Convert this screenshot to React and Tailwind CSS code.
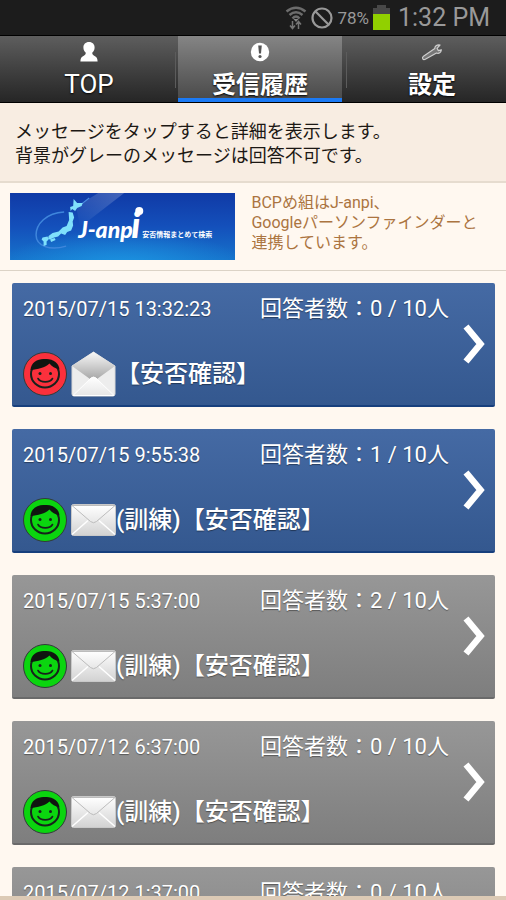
import React from "react";

const messages = [
  { date: "2015/07/15 13:32:23", count: 0, title: "【安否確認】", drill: false, safe: false, closed: false },
  { date: "2015/07/15 9:55:38", count: 1, title: "【安否確認】", drill: true, safe: true, closed: false },
  { date: "2015/07/15 5:37:00", count: 2, title: "【安否確認】", drill: true, safe: true, closed: true },
  { date: "2015/07/12 6:37:00", count: 0, title: "【安否確認】", drill: true, safe: true, closed: true },
  { date: "2015/07/12 1:37:00", count: 0, title: "【安否確認】", drill: true, safe: true, closed: true },
];

function StatusBar() {
  return (
    <div className="flex h-9 shrink-0 items-center justify-end border-b border-black bg-[#1c1c1c] pr-4 text-[#999999]">
      <svg width="22" height="26" viewBox="0 0 22 26" className="mr-1" aria-hidden="true">
        <g fill="none" stroke="#6c6c6c" strokeWidth="2.500">
          <path d="M1.500 6.500Q11 -1 20.500 6.500" />
          <path d="M4.500 10Q11 4.500 17.500 10" />
          <path d="M7.500 13.500Q11 9.500 14.500 13.500" />
        </g>
        <path d="M8.500 14h5l-2.500 3z" fill="#858585" />
        <path d="M7.500 16v7M5 20.500l2.500 3 2.500-3M13.500 24v-7M11 19.500l2.500-3 2.500 3" fill="none" stroke="#757575" strokeWidth="1.500" />
      </svg>
      <svg width="22" height="22" viewBox="0 0 22 22" className="mr-1" aria-hidden="true">
        <g fill="none" stroke="#999999" strokeWidth="2.200">
          <circle cx="11" cy="11" r="9.500" />
          <path d="M4.300 4.300l13.400 13.400" />
        </g>
      </svg>
      <span className="mr-1 text-[17px] leading-5">78%</span>
      <svg width="17" height="25" viewBox="0 0 17 25" className="mr-2" aria-hidden="true">
        <path d="M4 0h9v3h4v22H0V3h4z" fill="#484848" />
        <path d="M0 9h17v16H0z" fill="#91d000" />
      </svg>
      <span className="text-[25px] leading-8">1:32 PM</span>
    </div>
  );
}

function PersonIcon() {
  return (
    <svg width="20" height="22" viewBox="0 0 20 22" fill="#ffffff" aria-hidden="true">
      <path d="M10 1c3.600 0 5.600 2.400 5.600 5.500 0 2.400-1 4-2.400 5.300.1 1.800 1 2.600 2.800 3.400 1.700.8 2.500 2.300 2.600 5.300H1.400c.1-3 .9-4.500 2.600-5.300 1.800-.8 2.700-1.600 2.800-3.400C5.400 10.500 4.400 8.900 4.400 6.500 4.400 3.400 6.400 1 10 1z" />
    </svg>
  );
}

function AlertIcon() {
  return (
    <svg width="20" height="22" viewBox="0 0 20 22" aria-hidden="true">
      <circle cx="10" cy="11" r="9.200" fill="#ffffff" />
      <path d="M8.200 4.500h3.600l-.8 8H9z" fill="#555555" />
      <circle cx="10" cy="15.500" r="1.600" fill="#555555" />
    </svg>
  );
}

function WrenchIcon() {
  return (
    <svg width="24" height="22" viewBox="0 0 24 22" aria-hidden="true">
      <path
        d="M20 4c-3.400-.4-5.400 1.200-5.200 3.600L3.500 15.200c-2 1.400-.7 4.200 1.800 3.100L16.500 12c2.400.9 4.600-.4 4.900-3.200l-3 .8-1.400-2.300z"
        fill="#777777"
        stroke="#cfcfcf"
        strokeWidth="1.200"
        strokeLinejoin="round"
      />
    </svg>
  );
}

function Tabs() {
  const base =
    "relative flex flex-col items-center gap-[6px] pt-[5px] text-white [text-shadow:0_1px_2px_#000]";
  const idle = "bg-linear-to-b from-[#5e5e5e] to-[#262626]";
  return (
    <nav className="grid h-[67px] shrink-0 grid-cols-[178fr_164fr_164fr] border-b border-black">
      <button
        type="button"
        className={`${base} ${idle} after:absolute after:top-4 after:right-[2px] after:h-9 after:w-px after:bg-[#5c5c5c]`}
      >
        <PersonIcon />
        <span className="text-[26px] leading-[30px]">TOP</span>
      </button>
      <button
        type="button"
        aria-current="page"
        className={`${base} bg-linear-to-b from-[#858585] to-[#484848] shadow-[inset_0_-4px_0_#1b7af5]`}
      >
        <AlertIcon />
        <span className="text-2xl leading-[32px] font-bold">受信履歴</span>
      </button>
      <button
        type="button"
        className={`${base} ${idle} pl-4 after:absolute after:top-4 after:left-1 after:h-9 after:w-px after:bg-[#5c5c5c]`}
      >
        <WrenchIcon />
        <span className="text-2xl leading-[32px] font-bold">設定</span>
      </button>
    </nav>
  );
}

function AnpiBanner() {
  return (
    <svg viewBox="0 0 225 67" className="block w-full" role="img" aria-label="J-anpi 安否情報まとめて検索">
      <defs>
        <linearGradient id="sky" x1="0" y1="0" x2="0" y2="1">
          <stop offset="0" stopColor="#103aa6" />
          <stop offset="0.500" stopColor="#1450bb" />
          <stop offset="1" stopColor="#1673cb" />
        </linearGradient>
        <radialGradient id="glow" cx="0.500" cy="1.100" r="0.550">
          <stop offset="0" stopColor="#1d9be6" stopOpacity="0.850" />
          <stop offset="1" stopColor="#1d9be6" stopOpacity="0" />
        </radialGradient>
        <linearGradient id="beam" x1="1" y1="0" x2="0" y2="1">
          <stop offset="0" stopColor="#ffffff" stopOpacity="0.220" />
          <stop offset="1" stopColor="#ffffff" stopOpacity="0" />
        </linearGradient>
      </defs>
      <rect width="225" height="67" fill="url(#sky)" />
      <rect width="225" height="67" fill="url(#glow)" />
      <path d="M66 14L88 0h26L70 34z" fill="url(#beam)" />
      <path d="M54 19C36 20 26 31 26 42c0 11 14 16 30 11" fill="none" stroke="#3f86dc" strokeWidth="1.500" />
      <path d="M70 12L79 5" stroke="#4b8de0" strokeWidth="1" />
      <g fill="#7fe0fb">
        <path d="M63.500 6l3.500 4 5.500 0-1 3-4.500 2-2 3-3-2-1.500 2-0.500-4 3-1z" />
        <path d="M58.500 19l4 0.500 1.500 5-1.500 4 0.500 4-2 5-4 1.500-2 3-4-1.500-3 3-4 1-4 2-2-0.500 0.500-3 4-3 6-1.500 4-4 4-1.500 2.500-6z" />
        <path d="M40 46.500l4.500-1.500 1 2-4.500 2zM32.500 44.500l5-1 1 3-2 2 0 3.500-3 1 0-4.500-2-2z" />
      </g>
      <text y="45" fill="#ffffff" fontSize="23" fontWeight="900" fontStyle="italic" fontFamily="Lato, 'Liberation Sans', sans-serif">
        <tspan x="68">J-anp</tspan>
        <tspan x="121" fontSize="36">i</tspan>
      </text>
      <circle cx="129" cy="18" r="4" fill="#ffffff" />
      <text x="132" y="44" fill="#ffffff" fontSize="7" fontWeight="700" fontFamily="'Noto Sans CJK JP', sans-serif">
        安否情報まとめて検索
      </text>
    </svg>
  );
}

function Face({ safe }) {
  const color = safe ? "#0bd50f" : "#fb303c";
  return (
    <svg width="44" height="46" viewBox="0 0 44 46" role="img" aria-label={safe ? "無事" : "未回答"}>
      <circle cx="22" cy="23" r="21.500" fill={color} stroke="#333a3a" strokeWidth="1" />
      <ellipse cx="22" cy="23" rx="14" ry="13.500" fill={color} stroke="#17221c" strokeWidth="2" />
      <path d="M7.500 19C8 11 15 7.500 22 8c8-0.500 14 4 14.500 10.500-4-1-8-3-10-6C22 16.500 15 18.500 7.500 19z" fill="#101510" />
      <circle cx="17" cy="22.500" r="1.500" fill="#17221c" />
      <circle cx="27.500" cy="22.500" r="1.500" fill="#17221c" />
      <path d="M15 27.500c2.500 4.500 12 4.500 14.500 0" fill="none" stroke="#17221c" strokeWidth="1.600" strokeLinecap="round" />
    </svg>
  );
}

function Envelope({ open }) {
  return (
    <svg width="45" height="46" viewBox="0 0 45 46" aria-hidden="true">
      <defs>
        <linearGradient id="paper" x1="0" y1="0" x2="0" y2="1">
          <stop offset="0" stopColor="#ffffff" />
          <stop offset="1" stopColor="#d2d2d2" />
        </linearGradient>
        <linearGradient id="fold" x1="0" y1="0" x2="0" y2="1">
          <stop offset="0" stopColor="#f8f8f8" />
          <stop offset="1" stopColor="#a8a8a8" />
        </linearGradient>
        <linearGradient id="front" x1="0" y1="0" x2="0" y2="1">
          <stop offset="0" stopColor="#ffffff" />
          <stop offset="1" stopColor="#e6e6e6" />
        </linearGradient>
      </defs>
      {open ? (
        <g strokeLinejoin="round">
          <path d="M1 15L22.500 1 44 15v28q0 2-2 2H3q-2 0-2-2z" fill="#ededed" stroke="#d8d8d8" />
          <path d="M1 15L22.500 1 44 15 26 28q-3.500-2.500-7 0z" fill="url(#fold)" />
          <path d="M2 44.500l18-17.500q2.500-2 5 0l18 17.500z" fill="url(#front)" stroke="#ffffff" />
        </g>
      ) : (
        <g strokeLinejoin="round">
          <rect x="0.500" y="7.500" width="44" height="31" rx="2" fill="url(#paper)" stroke="#c9c9c9" />
          <path d="M1 37.500l16-14M44 37.500l-16-14" stroke="#ffffff" strokeWidth="1.500" />
          <path d="M1 8.500l18.500 16q3 2.500 6 0L44 8.500z" fill="url(#front)" stroke="#bcbcbc" />
        </g>
      )}
    </svg>
  );
}

function MessageCard({ message }) {
  const tone = message.closed
    ? "from-[#979797] to-[#7e7e7e] border-[#6a6a6a]"
    : "from-[#456aa4] to-[#34588f] border-[#173f7d]";
  return (
    <li>
      <button
        type="button"
        className={`flex h-[124px] w-full items-center rounded-xs border-b-2 bg-linear-to-b pr-2 pl-[11px] text-left text-white ${tone}`}
      >
        <span className="flex h-full min-w-0 flex-1 flex-col pt-3">
          <span className="flex items-center justify-between pr-1 leading-7 text-shadow-[0_1px_1px_#0006]">
            <span className="text-xl leading-7">{message.date}</span>
            <span className="text-[22px] leading-7">回答者数：{message.count} / 10人</span>
          </span>
          <span className="mt-7 flex items-center">
            <Face safe={message.safe} />
            <span className="ml-1">
              <Envelope open={!message.drill} />
            </span>
            <span className="text-2xl leading-8 font-medium text-shadow-[0_1px_1px_#0006]">
              {message.drill ? "(訓練)" : ""}
              {message.title}
            </span>
          </span>
        </span>
        <svg width="26" height="42" viewBox="0 0 26 42" className="ml-2 shrink-0" aria-hidden="true">
          <path d="M5 3.500L19.500 21 5 38.500" fill="none" stroke="#ffffff" strokeWidth="6.500" />
        </svg>
      </button>
    </li>
  );
}

export default function App() {
  return (
    <div className="flex h-screen flex-col overflow-hidden bg-[#fff8f0] font-[Roboto,'Noto_Sans_CJK_JP',sans-serif]">
      <StatusBar />
      <Tabs />
      <p className="shrink-0 border-b-2 border-[#e6dccf] bg-[#f8ede2] px-[15px] pt-[17px] pb-[13px] text-lg leading-6 text-[#1c1814]">
        メッセージをタップすると詳細を表示します。
        <br />
        背景がグレーのメッセージは回答不可です。
      </p>
      <section className="grid shrink-0 grid-cols-[225fr_250fr] gap-4 border-b border-[#dcd3c6] pt-[10px] pr-1 pb-[10px] pl-[10px]">
        <a href="#anpi">
          <AnpiBanner />
        </a>
        <p className="text-base leading-5 text-[#ab7440]">
          BCPめ組はJ-anpi、
          <br />
          Googleパーソンファインダーと
          <br />
          連携しています。
        </p>
      </section>
      <ul className="flex min-h-0 flex-1 flex-col gap-[22px] overflow-hidden pt-3 pr-[11px] pl-3">
        {messages.map((message) => (
          <MessageCard key={message.date} message={message} />
        ))}
      </ul>
      <div className="h-1 shrink-0 bg-[#dccab5]" />
    </div>
  );
}
